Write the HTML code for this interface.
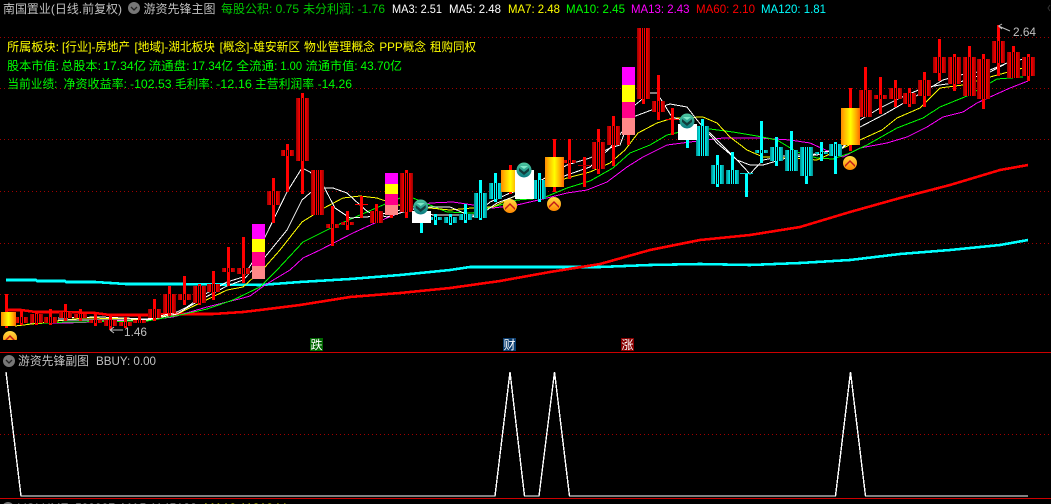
<!DOCTYPE html>
<html><head><meta charset="utf-8"><style>
html,body{margin:0;padding:0;background:#000;width:1051px;height:504px;overflow:hidden}
svg{display:block;position:absolute;left:0;top:0}
text{font-family:"Liberation Sans","WenQuanYi Zen Hei","Noto Sans CJK SC",sans-serif;font-size:12px}
.l{fill:none;stroke-width:1;shape-rendering:crispEdges}
.t{fill:none;stroke-width:2.6;shape-rendering:crispEdges}
rect{shape-rendering:crispEdges}
.r{fill:url(#r)}.c{fill:url(#c)}.g{fill:url(#g)}
</style></head><body>
<svg width="1051" height="504" viewBox="0 0 1051 504" xmlns="http://www.w3.org/2000/svg">
<defs>
<linearGradient id="r"><stop offset="0" stop-color="#900"/><stop offset=".15" stop-color="#c00"/><stop offset=".3" stop-color="#f00"/><stop offset=".3" stop-color="#000"/><stop offset=".385" stop-color="#000"/><stop offset=".385" stop-color="#f00"/><stop offset=".46" stop-color="#f00"/><stop offset=".46" stop-color="#000"/><stop offset=".54" stop-color="#000"/><stop offset=".54" stop-color="#f00"/><stop offset=".615" stop-color="#f00"/><stop offset=".615" stop-color="#000"/><stop offset=".7" stop-color="#000"/><stop offset=".7" stop-color="#f00"/><stop offset=".85" stop-color="#c00"/><stop offset="1" stop-color="#900"/></linearGradient>
<linearGradient id="c"><stop offset="0" stop-color="#088"/><stop offset=".15" stop-color="#0bb"/><stop offset=".3" stop-color="#0ee"/><stop offset=".3" stop-color="#000"/><stop offset=".385" stop-color="#000"/><stop offset=".385" stop-color="#0ff"/><stop offset=".46" stop-color="#0ff"/><stop offset=".46" stop-color="#000"/><stop offset=".54" stop-color="#000"/><stop offset=".54" stop-color="#0ff"/><stop offset=".615" stop-color="#0ff"/><stop offset=".615" stop-color="#000"/><stop offset=".7" stop-color="#000"/><stop offset=".7" stop-color="#0ee"/><stop offset=".85" stop-color="#0bb"/><stop offset="1" stop-color="#088"/></linearGradient>
<linearGradient id="g"><stop offset="0" stop-color="#f80"/><stop offset=".2" stop-color="#fb0"/><stop offset=".5" stop-color="#ff0"/><stop offset=".8" stop-color="#fa0"/><stop offset="1" stop-color="#f60"/></linearGradient>
<linearGradient id="bo" x1="0" y1="0" x2="0" y2="1"><stop offset="0" stop-color="#fd4"/><stop offset="1" stop-color="#f80"/></linearGradient>
<linearGradient id="bg" x1="0" y1="0" x2="0" y2="1"><stop offset="0" stop-color="#4fc8a0"/><stop offset="1" stop-color="#0a7a80"/></linearGradient>
<g id="up"><circle r="7" fill="url(#bo)"/><path d="M-5 2L0-3L5 2V4L0-1L-5 4Z" fill="#c01818"/></g>
<g id="dn"><circle r="7.5" fill="url(#bg)"/><path d="M-5-2L0 2L5-2V1L0 5L-5 1Z" fill="#123c3c"/><path d="M-4-4H4L0-1Z" fill="#7fe8c8"/></g>
<g id="ic"><circle r="6" fill="#777"/><path d="M-3-1L0 2L3-1" fill="none" stroke="#222" stroke-width="1.3"/></g>
<clipPath id="cb"><rect x="0" y="320" width="40" height="20"/></clipPath>
</defs>
<rect width="1051" height="504" fill="#000"/>

<g fill="none" stroke="#a00000" stroke-dasharray="1 3" shape-rendering="crispEdges">
<path d="M0 37.5H1051M0 88.5H1051M0 139.5H1051M0 191.5H1051M0 243.5H1051M0 294.5H1051M0 434.5H1051"/>
</g>

<polyline class="t" stroke="#0ff" points="6,280 36,280 37,281 65,281 66,282 95,282 126,284 180,284 260,285 300,282 350,279 400,275 450,270 470,267 520,267 600,267 650,265 700,264 750,265 800,263 850,260 900,254 950,250 1000,245 1028,240"/>
<polyline class="t" stroke="#f00" points="6,310 21,310 36,312 65,312 95,313 110,315 154,315 169,314 213,314 243,312 260,310 300,305 350,297 400,293 450,288 500,281 550,272 600,264 650,250 700,240 750,235 800,227 850,212 900,198 950,185 1000,170 1028,165"/>

<polyline class="l" stroke="#f0f" points="30,323 67,323 93,322 147,320 173,317 207,307 243,298 250,296 265,285 290,270 303,258 320,250 353,233 377,222 402,212 430,203 453,202 473,205 493,208 517,205 547,198 567,193 587,190 607,182 627,167 643,157 667,145 690,142 723,138 760,138 790,140 810,143 830,152 843,157 860,148 887,143 907,137 927,127 943,117 963,112 977,103 990,97 1010,88 1028,81"/>
<polyline class="l" stroke="#0f0" points="27,324 67,322 147,321 180,315 207,309 233,300 260,287 277,270 303,242 333,227 360,215 383,205 400,198 413,198 430,205 447,212 473,213 493,207 517,200 543,198 567,188 590,181 613,168 630,153 650,145 667,135 680,132 710,129 733,132 757,136 777,140 797,152 817,158 833,159 850,153 867,145 897,128 923,118 940,107 967,96 990,83 997,79 1023,77"/>
<polyline class="l" stroke="#ff0" points="15,326 57,321 83,318 147,319 177,314 200,303 227,290 243,287 265,267 280,250 302,222 310,217 324,208 343,198 360,196 377,198 397,205 430,208 450,210 472,208 493,207 513,197 567,178 590,172 610,163 625,150 638,133 657,123 673,118 703,117 717,123 730,137 747,150 763,157 790,158 817,160 843,148 860,140 882,130 897,118 920,108 940,88 963,85 990,77 1023,68"/>
<polyline class="l" stroke="#fff" points="58,320 147,320 177,314 200,300 227,286 243,280 265,257 287,230 302,200 310,193 324,187 335,208 350,218 367,217 387,213 410,208 433,215 480,215 497,203 513,197 567,165 590,158 610,148 633,117 657,108 670,104 687,107 697,120 717,143 737,160 750,165 763,165 790,157 817,155 843,147 860,120 880,108 900,98 923,88 940,85 960,82 990,72 1007,63 1028,58"/>
<polyline class="l" stroke="#fff" points="58,318 100,317 147,319 177,312 187,307 207,293 227,282 243,277 252,263 267,233 287,192 302,168 310,172 324,188 333,188 347,193 360,205 368,212 387,217 410,210 430,207 450,207 473,217 490,202 510,193 540,185 567,175 590,167 610,148 620,145 635,105 650,93 657,93 672,117 687,122 710,133 737,160 750,174 763,160 790,155 810,155 843,148 860,127 883,115 923,92 943,80 960,75 990,70 1017,59"/>

<path stroke="#f00" stroke-width="3" fill="none" shape-rendering="crispEdges" d="M6.5 294V328M21.5 310V325M36.5 311V325M50.5 309V325M65.5 304V321M80.5 309V321M95.5 313V326M110.5 314V330M125.5 317V328M139.5 315V323M154.5 299V321M169.5 286V316M184.5 276V305M199.5 284V305M213.5 271V300M228.5 247V286M243.5 237V283M273.5 178V223M287.5 144V192M302.5 93V194M332.5 206V246M347.5 211V230M361.5 196V218M376.5 204V223M391.5 215V218M406.5 170V218M510.5 165V194M554.5 139V192M569.5 139V179M584.5 157V187M598.5 129V174M613.5 116V166M628.5 135V145M643.5 99V104M658.5 75V120M672.5 108V135M850.5 88V151M865.5 67V117M880.5 77V114M895.5 80V107M909.5 88V107M924.5 72V107M939.5 39V81M954.5 54V91M969.5 46V96M983.5 54V109M998.5 25V76M1013.5 46V78M1028.5 54V81"/>
<path stroke="#0ff" stroke-width="3" fill="none" shape-rendering="crispEdges" d="M421.5 223V233M435.5 214V225M450.5 214V225M465.5 204V223M480.5 180V220M495.5 173V202M539.5 173V202M687.5 140V148M702.5 119V156M717.5 155V187M732.5 152V184M746.5 173V197M761.5 121V163M776.5 137V166M791.5 131V171M806.5 147V184M821.5 142V161M835.5 142V174"/>

<g>
<rect class="r" x="15" y="317" width="13" height="6"/><rect class="r" x="30" y="314" width="13" height="9"/><rect class="r" x="44" y="317" width="13" height="6"/><rect class="r" x="59" y="312" width="13" height="6"/><rect class="r" x="74" y="314" width="13" height="4"/><rect class="r" x="89" y="320" width="13" height="3"/><rect class="r" x="104" y="320" width="13" height="6"/><rect class="r" x="119" y="322" width="13" height="4"/><rect class="r" x="133" y="320" width="13" height="3"/><rect class="r" x="148" y="309" width="13" height="9"/><rect class="r" x="163" y="294" width="13" height="19"/><rect class="r" x="178" y="294" width="13" height="6"/><rect class="r" x="193" y="286" width="13" height="17"/><rect class="r" x="207" y="284" width="13" height="8"/><rect class="r" x="222" y="268" width="13" height="4"/><rect class="r" x="237" y="268" width="13" height="6"/>
<rect class="r" x="267" y="191" width="13" height="14"/><rect class="r" x="281" y="150" width="13" height="6"/><rect class="r" x="296" y="98" width="13" height="63"/><rect class="r" x="311" y="170" width="13" height="45"/><rect class="r" x="326" y="224" width="13" height="4"/><rect class="r" x="341" y="222" width="13" height="3"/><rect x="355" y="204" width="13" height="1" fill="#f00"/><rect class="r" x="370" y="211" width="13" height="12"/><rect class="r" x="400" y="173" width="13" height="39"/>
<rect x="563" y="160" width="13" height="3" class="r"/><rect x="578" y="165" width="13" height="1" fill="#a00"/><rect class="r" x="592" y="142" width="13" height="27"/><rect class="r" x="607" y="126" width="13" height="19"/><rect class="r" x="637" y="28" width="13" height="71"/><rect class="r" x="652" y="101" width="13" height="11"/><rect x="666" y="119" width="13" height="1" fill="#f00"/>
<rect class="r" x="859" y="90" width="13" height="27"/><rect class="r" x="874" y="95" width="13" height="4"/><rect class="r" x="889" y="88" width="13" height="11"/><rect class="r" x="903" y="93" width="13" height="11"/><rect class="r" x="918" y="80" width="13" height="16"/><rect class="r" x="933" y="57" width="13" height="16"/><rect class="r" x="948" y="57" width="13" height="27"/><rect class="r" x="963" y="57" width="13" height="39"/><rect class="r" x="977" y="59" width="13" height="40"/><rect class="r" x="992" y="41" width="13" height="22"/><rect class="r" x="1007" y="52" width="13" height="26"/><rect class="r" x="1022" y="57" width="13" height="19"/>
</g>
<g>
<rect class="c" x="429" y="217" width="13" height="3"/><rect class="c" x="444" y="217" width="13" height="6"/><rect class="c" x="459" y="214" width="13" height="6"/><rect class="c" x="474" y="193" width="13" height="25"/><rect class="c" x="489" y="183" width="13" height="16"/><rect class="c" x="533" y="180" width="13" height="19"/><rect class="c" x="696" y="126" width="13" height="30"/><rect class="c" x="711" y="165" width="13" height="19"/><rect class="c" x="726" y="170" width="13" height="14"/><rect x="740" y="173" width="13" height="1" fill="#0cc"/><rect class="c" x="755" y="150" width="13" height="3"/><rect class="c" x="770" y="147" width="13" height="14"/><rect class="c" x="785" y="150" width="13" height="21"/><rect class="c" x="800" y="147" width="13" height="29"/><rect class="c" x="815" y="152" width="13" height="2"/><rect class="c" x="829" y="144" width="13" height="12"/>
</g>

<rect x="252" y="224" width="13" height="15" fill="#f0f"/><rect x="252" y="239" width="13" height="13" fill="#ff0"/><rect x="252" y="252" width="13" height="14" fill="#f08"/><rect x="252" y="266" width="13" height="13" fill="#f88"/>
<rect x="385" y="173" width="13" height="11" fill="#f0f"/><rect x="385" y="184" width="13" height="10" fill="#ff0"/><rect x="385" y="194" width="13" height="11" fill="#f08"/><rect x="385" y="205" width="13" height="10" fill="#f88"/>
<rect x="622" y="67" width="13" height="18" fill="#f0f"/><rect x="622" y="85" width="13" height="17" fill="#ff0"/><rect x="622" y="102" width="13" height="16" fill="#f08"/><rect x="622" y="118" width="13" height="17" fill="#f88"/>

<rect class="g" x="1" y="312" width="15" height="14"/>
<rect class="g" x="501" y="170" width="19" height="22"/>
<rect class="g" x="545" y="157" width="19" height="30"/>
<rect class="g" x="841" y="108" width="19" height="37"/>

<rect x="412" y="211" width="19" height="12" fill="#fff"/>
<rect x="515" y="170" width="19" height="29" fill="#fff"/>
<rect x="678" y="124" width="19" height="16" fill="#fff"/>

<use href="#dn" x="420.7" y="207"/><use href="#dn" x="524" y="170"/><use href="#dn" x="687" y="121"/>
<use href="#up" x="510" y="206"/><use href="#up" x="554" y="204"/><use href="#up" x="850" y="163"/>
<g clip-path="url(#cb)"><use href="#up" x="10" y="338"/></g>

<path d="M998.5 26L1002 24M998.5 26L1002 29M998.5 26L1010 31" stroke="#c0c0c0" fill="none"/>
<text x="1013" y="36" fill="#c0c0c0" textLength="23" lengthAdjust="spacingAndGlyphs">2.64</text>
<path d="M110 330H123M110 330L114 327M110 330L114 333" stroke="#c0c0c0" fill="none"/>
<text x="124" y="336" fill="#c0c0c0" textLength="23" lengthAdjust="spacingAndGlyphs">1.46</text>

<rect x="310" y="338" width="13" height="13" fill="#060"/><text x="310.5" y="349" fill="#fff" textLength="12" lengthAdjust="spacingAndGlyphs">跌</text>
<rect x="503" y="338" width="13" height="13" fill="#0a3c6e"/><text x="503.5" y="349" fill="#fff" textLength="12" lengthAdjust="spacingAndGlyphs">财</text>
<rect x="621" y="338" width="13" height="13" fill="#800"/><text x="621.5" y="349" fill="#fff" textLength="12" lengthAdjust="spacingAndGlyphs">涨</text>

<rect x="0" y="352" width="1051" height="1" fill="#c00"/>
<rect x="0" y="498" width="1051" height="1" fill="#c00"/>
<polyline fill="none" stroke="#fff" stroke-width="1.4" shape-rendering="crispEdges" points="6,372 21,496 495,496 510,372 524.5,496 539,496 554.5,372 569.5,496 835.5,496 850.5,372 865.5,496 1028,496"/>

<text x="3" y="13" fill="#c0c0c0" textLength="119" lengthAdjust="spacingAndGlyphs">南国置业(日线.前复权)</text>
<use href="#ic" x="134" y="8"/>
<text x="143.5" y="13" fill="#c0c0c0" textLength="72" lengthAdjust="spacingAndGlyphs">游资先锋主图</text>
<text x="221" y="13" fill="#00c800" textLength="78" lengthAdjust="spacingAndGlyphs">每股公积: 0.75</text>
<text x="303" y="13" fill="#00c800" textLength="82" lengthAdjust="spacingAndGlyphs">未分利润: -1.76</text>
<text x="392" y="13" fill="#fff" textLength="50" lengthAdjust="spacingAndGlyphs">MA3: 2.51</text>
<text x="449" y="13" fill="#fff" textLength="52" lengthAdjust="spacingAndGlyphs">MA5: 2.48</text>
<text x="508" y="13" fill="#ff0" textLength="52" lengthAdjust="spacingAndGlyphs">MA7: 2.48</text>
<text x="566" y="13" fill="#0f0" textLength="59" lengthAdjust="spacingAndGlyphs">MA10: 2.45</text>
<text x="631" y="13" fill="#f0f" textLength="58.5" lengthAdjust="spacingAndGlyphs">MA13: 2.43</text>
<text x="696" y="13" fill="#f00" textLength="59" lengthAdjust="spacingAndGlyphs">MA60: 2.10</text>
<text x="761" y="13" fill="#0ff" textLength="65" lengthAdjust="spacingAndGlyphs">MA120: 1.81</text>

<g fill="#ff0">
<text x="7" y="51" textLength="52" lengthAdjust="spacingAndGlyphs">所属板块:</text>
<text x="62" y="51" textLength="68" lengthAdjust="spacingAndGlyphs">[行业]-房地产</text>
<text x="134.5" y="51" textLength="80.5" lengthAdjust="spacingAndGlyphs">[地域]-湖北板块</text>
<text x="219.6" y="51" textLength="80.4" lengthAdjust="spacingAndGlyphs">[概念]-雄安新区</text>
<text x="304" y="51" textLength="71" lengthAdjust="spacingAndGlyphs">物业管理概念</text>
<text x="379.4" y="51" textLength="46.6" lengthAdjust="spacingAndGlyphs">PPP概念</text>
<text x="430" y="51" textLength="46" lengthAdjust="spacingAndGlyphs">租购同权</text>
</g>
<g fill="#0f0">
<text x="7" y="70" textLength="52" lengthAdjust="spacingAndGlyphs">股本市值:</text>
<text x="61" y="70" textLength="40" lengthAdjust="spacingAndGlyphs">总股本:</text>
<text x="103" y="70" textLength="43" lengthAdjust="spacingAndGlyphs">17.34亿</text>
<text x="148.6" y="70" textLength="41" lengthAdjust="spacingAndGlyphs">流通盘:</text>
<text x="192" y="70" textLength="41" lengthAdjust="spacingAndGlyphs">17.34亿</text>
<text x="236.5" y="70" textLength="41" lengthAdjust="spacingAndGlyphs">全流通:</text>
<text x="280.4" y="70" textLength="21.6" lengthAdjust="spacingAndGlyphs">1.00</text>
<text x="305.7" y="70" textLength="52" lengthAdjust="spacingAndGlyphs">流通市值:</text>
<text x="360.5" y="70" textLength="41.5" lengthAdjust="spacingAndGlyphs">43.70亿</text>
<text x="7.4" y="88" textLength="50" lengthAdjust="spacingAndGlyphs">当前业绩:</text>
<text x="63.5" y="88" textLength="63.5" lengthAdjust="spacingAndGlyphs">净资收益率:</text>
<text x="130" y="88" textLength="41.6" lengthAdjust="spacingAndGlyphs">-102.53</text>
<text x="175" y="88" textLength="38" lengthAdjust="spacingAndGlyphs">毛利率:</text>
<text x="216" y="88" textLength="36" lengthAdjust="spacingAndGlyphs">-12.16</text>
<text x="255" y="88" textLength="59" lengthAdjust="spacingAndGlyphs">主营利润率</text>
<text x="317.6" y="88" textLength="34.4" lengthAdjust="spacingAndGlyphs">-14.26</text>
</g>

<use href="#ic" x="9" y="361"/>
<text x="18" y="365" fill="#c0c0c0" textLength="71" lengthAdjust="spacingAndGlyphs">游资先锋副图</text>
<text x="96" y="365" fill="#c0c0c0" textLength="60" lengthAdjust="spacingAndGlyphs">BBUY: 0.00</text>

<use href="#ic" x="8" y="508"/>
<text x="18" y="512" fill="#c0c0c0" textLength="97" lengthAdjust="spacingAndGlyphs">VOLUME: 599997</text>
<text x="121" y="512" fill="#c0c0c0" textLength="76" lengthAdjust="spacingAndGlyphs">MA5 1145188</text>
<text x="204" y="512" fill="#ff0" textLength="83" lengthAdjust="spacingAndGlyphs">MA10 1181944</text>
<path d="M1050 5L1048 8L1050 11" stroke="#333" fill="none"/>
</svg>
</body></html>
